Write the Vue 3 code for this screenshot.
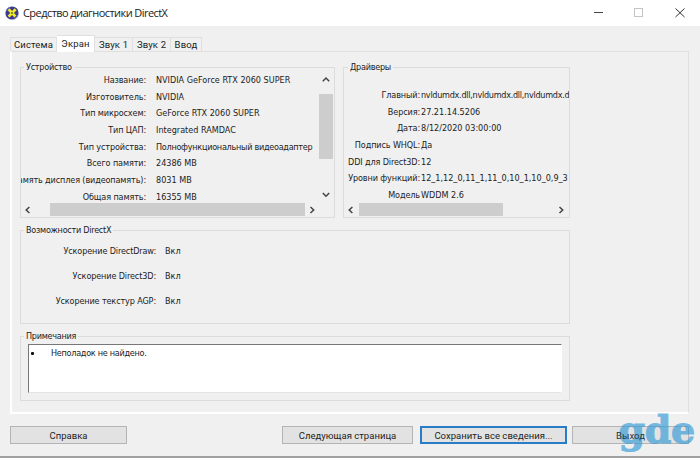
<script setup>
import { ref } from "vue";

const tabs = ["Система", "Экран", "Звук 1", "Звук 2", "Ввод"];
const activeTab = ref("Экран");

const device = [
  ["Название:", "NVIDIA GeForce RTX 2060 SUPER"],
  ["Изготовитель:", "NVIDIA"],
  ["Тип микросхем:", "GeForce RTX 2060 SUPER"],
  ["Тип ЦАП:", "Integrated RAMDAC"],
  ["Тип устройства:", "Полнофункциональный видеоадаптер", "tight"],
  ["Всего памяти:", "24386 MB"],
  ["Память дисплея (видеопамять):", "8031 MB"],
  ["Общая память:", "16355 MB"],
];

const drivers = [
  ["Главный:", "nvldumdx.dll,nvldumdx.dll,nvldumdx.d", "tight"],
  ["Версия:", "27.21.14.5206"],
  ["Дата:", "8/12/2020 03:00:00"],
  ["Подпись WHQL:", "Да"],
  ["DDI для Direct3D:", "12"],
  ["Уровни функций:", "12_1,12_0,11_1,11_0,10_1,10_0,9_3"],
  ["Модель", "WDDM 2.6"],
];

const features = [
  ["Ускорение DirectDraw:", "Вкл"],
  ["Ускорение Direct3D:", "Вкл"],
  ["Ускорение текстур AGP:", "Вкл"],
];
</script>

<template>
  <div class="window">
    <header class="titlebar">
      <svg class="logo" width="14" height="14" viewBox="0 0 14 14">
        <circle cx="7" cy="7" r="6.6" fill="#3a3a90" />
        <path d="M1 5a6.3 6.3 0 0 1 4-4M13 9a6.3 6.3 0 0 1-4 4" stroke="#8b8bc4" fill="none" />
        <path d="M3.6 3.3l6.8 7.2M10.6 3.2l-7 7.4" stroke="#f0ea28" stroke-width="2.7" />
        <circle cx="7" cy="7" r="1.1" fill="#77771c" />
      </svg>
      <span class="title">Средство диагностики DirectX</span>
      <svg class="controls" width="100" height="14" viewBox="0 0 100 14">
        <path d="M2 6.5h9" stroke="#444" fill="none" />
        <rect x="42.5" y="2.5" width="8" height="8" stroke="#c4c4c4" fill="none" />
        <path d="M83.5 2.5l9 8.5M92.5 2.5l-9 8.5" stroke="#333" fill="none" />
      </svg>
    </header>

    <nav class="tabs">
      <button v-for="tab in tabs" :key="tab" class="tab" :class="{ active: tab === activeTab }" @click="activeTab = tab">
        {{ tab }}
      </button>
    </nav>

    <main class="page">
      <div class="top_row">
        <section class="group device">
          <h2>Устройство</h2>
          <div class="device_body">
            <div class="rows">
              <div v-for="row in device" :key="row[0]" class="row">
                <span class="label">{{ row[0] }}</span><span class="value" :class="row[2]">{{ row[1] }}</span>
              </div>
            </div>
            <div class="vscroll">
              <svg width="14" height="16" viewBox="0 0 14 16"><path d="M3.8 9.2L7 6l3.2 3.2" /></svg>
              <div class="vthumb"></div>
              <svg width="14" height="16" viewBox="0 0 14 16"><path d="M3.8 6L7 9.2 10.2 6" /></svg>
            </div>
          </div>
          <div class="hscroll">
            <svg width="14" height="14" viewBox="0 0 14 14"><path d="M8.4 4L5.2 7l3.2 3" /></svg>
            <div class="hthumb"></div>
            <svg width="14" height="14" viewBox="0 0 14 14"><path d="M5.5 4l3.2 3-3.2 3" /></svg>
          </div>
        </section>

        <section class="group drivers">
          <h2>Драйверы</h2>
          <div class="rows">
            <div v-for="row in drivers" :key="row[0]" class="row">
              <span class="label">{{ row[0] }}</span><span class="value" :class="row[2]">{{ row[1] }}</span>
            </div>
          </div>
          <div class="hscroll">
            <svg width="14" height="14" viewBox="0 0 14 14"><path d="M8.4 4L5.2 7l3.2 3" /></svg>
            <div class="hthumb"></div>
            <svg width="14" height="14" viewBox="0 0 14 14"><path d="M5.5 4l3.2 3-3.2 3" /></svg>
          </div>
        </section>
      </div>

      <section class="group features">
        <h2>Возможности DirectX</h2>
        <div v-for="row in features" :key="row[0]" class="row">
          <span class="label">{{ row[0] }}</span><span class="value">{{ row[1] }}</span>
        </div>
      </section>

      <section class="group notes">
        <h2>Примечания</h2>
        <div class="notes_box"><i class="bullet"></i><span class="tight">Неполадок не найдено.</span></div>
      </section>
    </main>

    <footer class="buttons">
      <button class="btn help">Справка</button>
      <button class="btn next">Следующая страница</button>
      <button class="btn save">Сохранить все сведения...</button>
      <button class="btn exit"><span>Выход</span></button>
    </footer>
    <div class="watermark">gde</div>
  </div>
</template>

<style>
body {
  margin: 0;
  overflow: hidden;
}
</style>

<style scoped>
* {
  box-sizing: border-box;
}

.window {
  position: relative;
  display: flex;
  flex-direction: column;
  width: 700px;
  height: 458px;
  background: #f0f0f0;
  border-bottom: 2px solid #a0a0a0;
  color: #222;
  font-family: "DejaVu Sans Condensed", "DejaVu Sans", sans-serif;
  font-stretch: condensed;
  font-size: 9px;
  white-space: nowrap;
  overflow: hidden;
}

.titlebar {
  display: flex;
  align-items: center;
  height: 26px;
  padding: 0 8px 0 5px;
  background: #fff;
}

.title {
  flex: 1;
  margin: -1px 0 0 4px;
  font: 11px "Open Sans", sans-serif;
  letter-spacing: -0.56px;
}

.tabs {
  display: flex;
  align-items: flex-end;
  height: 25px;
  padding-left: 10px;
}

.tab {
  height: 14px;
  width: 38px;
  padding: 0;
  border: 1px solid #dfdfdf;
  border-width: 1px 1px 0 0;
  background: #f0f0f0;
  color: #222;
  font: 9.5px/13px Roboto, sans-serif;
  letter-spacing: 0.15px;
}

.tab:first-child {
  width: 47px;
  border-left-width: 1px;
}

.tab:last-child {
  width: 31px;
}

.tab.active {
  position: relative;
  height: 17px;
  margin-bottom: -1px;
  padding-bottom: 2px;
  background: #fff;
}

.page {
  height: 363px;
  width: 679px;
  margin-left: 10px;
  padding: 15px 0 0 10px;
  border: 1px solid #dfdfdf;
  border-left: 2px solid #fff;
  border-bottom: 2px solid #fff;
}

.top_row {
  display: flex;
  gap: 8px;
}

.group {
  position: relative;
  margin-left: -2px;
  border: 1px solid #dcdcdc;
}

.group h2 {
  position: absolute;
  top: -7px;
  left: 3px;
  margin: 0;
  padding: 0 2px;
  background: #f0f0f0;
  font-size: 9px;
  font-weight: normal;
  line-height: 13px;
  letter-spacing: -0.26px;
}

.row {
  display: flex;
}

.label {
  display: flex;
  flex: none;
  justify-content: flex-end;
  letter-spacing: -0.12px;
}

.tight {
  letter-spacing: -0.27px;
}

.device {
  width: 315px;
  height: 151px;
}

.device_body {
  display: flex;
  height: 135px;
  overflow: hidden;
}

.device .rows {
  width: 298px;
  padding-top: 4px;
  overflow: hidden;
}

.device .row {
  height: 16.7px;
  line-height: 17px;
}

.device .label {
  width: 125px;
  margin-right: 10px;
}

.vscroll {
  display: flex;
  flex-direction: column;
  width: 14px;
  padding-top: 4px;
}

.vthumb {
  height: 66px;
  margin: 6px 0 28px;
  background: #cdcdcd;
}

.vscroll svg,
.hscroll svg {
  flex: none;
  fill: none;
  stroke: #444;
  stroke-width: 1.5;
}

.hscroll {
  display: flex;
  height: 13px;
}

.hthumb {
  width: 255px;
  margin-left: 15px;
  background: #cdcdcd;
}

.drivers {
  width: 227px;
  height: 151px;
  margin-left: 0;
}

.drivers h2 {
  left: 4px;
}

.drivers .rows {
  height: 135px;
  padding-top: 19px;
  overflow: hidden;
}

.drivers .row {
  height: 16.7px;
  line-height: 17px;
}

.drivers .label {
  width: 76px;
  margin-right: 1px;
}

.drivers .hthumb {
  width: 144px;
  margin: 0 51px 0 1px;
}

.features {
  width: 550px;
  height: 94px;
  margin-top: 12px;
  padding-top: 8px;
}

.features .row {
  height: 25px;
  line-height: 25px;
}

.features .label {
  width: 135px;
  margin-right: 9px;
}

.notes {
  width: 550px;
  height: 65px;
  margin-top: 12px;
  padding: 7px;
}

.notes_box {
  display: flex;
  height: 49px;
  padding-left: 2px;
  background: #fff;
  border: 1px solid #777;
  border-right-color: #fff;
  border-bottom-color: #e4e4e4;
  line-height: 16px;
}

.bullet {
  width: 3px;
  height: 3px;
  margin: 7px 17px 0 0;
  border-radius: 1px;
  background: #111;
}

.buttons {
  display: flex;
  margin-top: 12px;
  padding-left: 10px;
}

.btn {
  height: 18px;
  padding: 0;
  border: 1px solid #b4b4b4;
  background: #e2e2e2;
  color: #222;
  font: 9.5px/17px Roboto, sans-serif;
  letter-spacing: 0.03px;
}

.help {
  width: 117px;
}

.next {
  width: 131px;
  margin-left: 155px;
}

.save {
  width: 147px;
  margin-left: 7px;
  border: 2px solid #2a7cc6;
  line-height: 15px;
}

.exit {
  width: 117px;
  margin-left: 5px;
}

/* keeps the caption readable above the watermark */
.exit span {
  position: relative;
  z-index: 1;
  color: #234;
}

.watermark {
  position: absolute;
  right: 5px;
  bottom: 1px;
  color: #349bd7;
  font: bold 38px/50px "DejaVu Serif", serif;
  -webkit-text-stroke: 1.2px #349bd7;
  letter-spacing: -0.3px;
  opacity: 0.65;
  pointer-events: none;
}
</style>
